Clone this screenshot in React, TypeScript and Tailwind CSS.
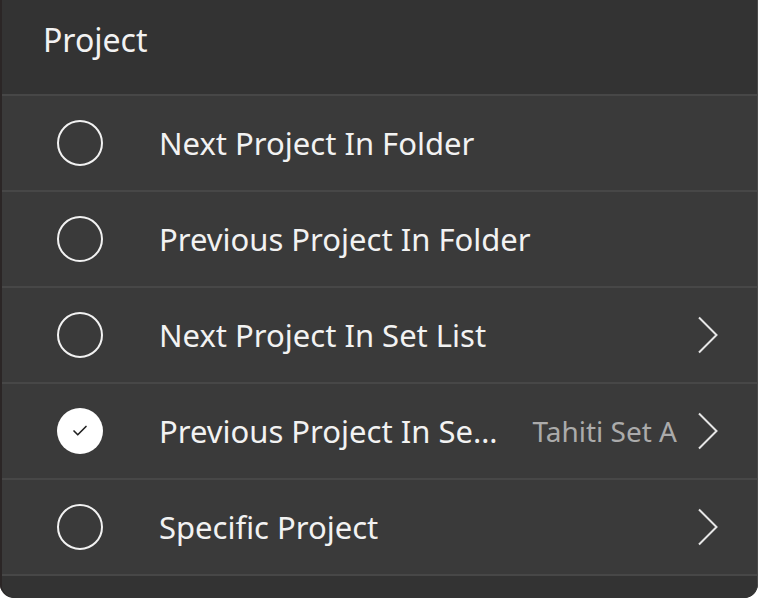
import { Check } from 'lucide-react';

interface Row {
  label: string;
  checked?: boolean;
  detail?: string;
  chevron?: boolean;
}

const rows: Row[] = [
  { label: 'Next Project In Folder' },
  { label: 'Previous Project In Folder' },
  { label: 'Next Project In Set List', chevron: true },
  { label: 'Previous Project In Set List', checked: true, detail: 'Tahiti Set A', chevron: true },
  { label: 'Specific Project', chevron: true },
];

const Chevron = () => (
  <svg width="22" height="38" viewBox="0 0 22 38" fill="none" className="shrink-0">
    <path d="M2 1.5 L19.5 19 L2 36.5" stroke="#e6e6e6" strokeWidth="2" />
  </svg>
);

const App = () => {
  return (
    <div className="w-[760px] h-[600px] bg-white font-['Noto_Sans',sans-serif]">
      <div className="w-[758px] h-[598px] flex bg-[#2a2a2a] rounded-b-[14px] overflow-hidden">
        <div className="w-[2px] shrink-0 bg-[#2b2626]" />
        <div className="flex-1 flex flex-col bg-[#333333] border-r border-[#4a4a4a] rounded-b-[14px] overflow-hidden">
          <div className="h-[96px] shrink-0 border-b-2 border-[#474747] flex items-center pl-[41px] pb-[14px]">
            <span className="text-[32px] text-[#f2f2f2]">Project</span>
          </div>
          {rows.map((row) => (
            <div
              key={row.label}
              className="h-[96px] shrink-0 bg-[#3a3a3a] border-b-2 border-[#474747] flex items-center pl-[55px] pr-[38px]"
            >
              {row.checked ? (
                <div className="w-[46px] h-[46px] rounded-full bg-white flex items-center justify-center shrink-0">
                  <Check className="w-[18px] h-[18px] text-[#222]" strokeWidth={2.2} />
                </div>
              ) : (
                <div className="w-[46px] h-[46px] rounded-full border-2 border-[#f2f2f2] shrink-0" />
              )}
              <span className="ml-[56px] text-[31px] text-[#f2f2f2] truncate min-w-0 flex-1">
                {row.label}
              </span>
              {row.detail && (
                <span className="ml-[28px] text-[28px] text-[#ababab] whitespace-nowrap">{row.detail}</span>
              )}
              {row.chevron && (
                <div className="ml-[20px]">
                  <Chevron />
                </div>
              )}
            </div>
          ))}
          <div className="flex-1 bg-[#333333]" />
        </div>
      </div>
    </div>
  );
};

export default App;
